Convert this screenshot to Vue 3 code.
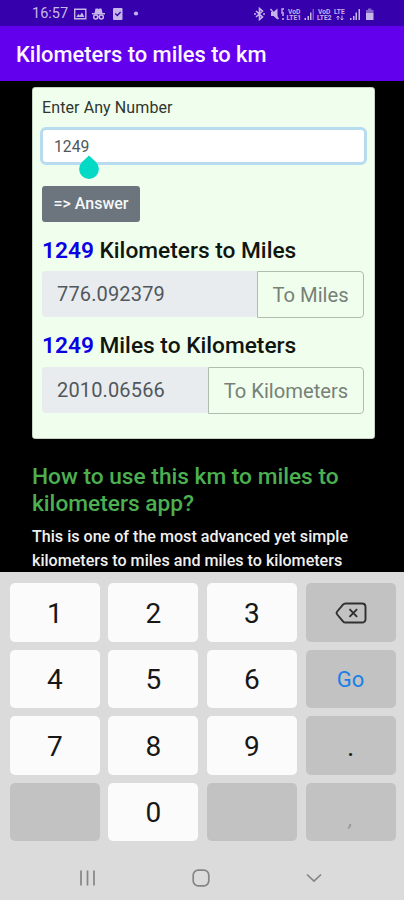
<script setup>
import { ref } from 'vue'

const value = ref('1249')
const keys = [
  { label: '1' }, { label: '2' }, { label: '3' }, { icon: 'backspace', dark: true },
  { label: '4' }, { label: '5' }, { label: '6' }, { label: 'Go', dark: true, go: true },
  { label: '7' }, { label: '8' }, { label: '9' }, { label: '.', dark: true },
  { label: '', dark: true }, { label: '0' }, { label: '', dark: true }, { label: ',', dark: true, comma: true },
]
</script>

<template>
  <div class="phone">
    <header class="status">
      <span class="time">16:57</span>
      <svg class="notices" width="70" height="14" viewBox="0 0 70 14">
        <path fill-rule="evenodd" d="M0 1.500h12.500v11H0zM1.400 3v8h9.700V3zM2.300 10l2-3 1.600 1.500L8 5.500 10.500 10z" />
        <path d="M21.500 1.500h2l1 .6 1-.6h2l1 4.500H31v1.500H18V6h2.500z" />
        <circle cx="21.700" cy="10" r="2" fill="none" stroke="#cabce9" stroke-width="1.500" />
        <circle cx="27.300" cy="10" r="2" fill="none" stroke="#cabce9" stroke-width="1.500" />
        <path d="M23.500 9.300h2v1h-2z" />
        <rect x="39" y="1" width="9.500" height="12" rx="1" />
        <path d="M41.300 6.500l2 2 3.300-3.500" fill="none" stroke="#3700ad" stroke-width="1.300" />
        <circle cx="62" cy="6.500" r="2.100" />
      </svg>
      <svg class="signals" width="124" height="14" viewBox="0 0 124 14">
        <path d="M4 4l6.500 6-3 2.500v-11l3 2.500L4 10M2 7h2M11 7h2" fill="none" stroke="#c5b5e9" stroke-width="1.600" />
        <path d="M19 5h2.500l4-3.500v11L21.500 9H19z" />
        <path d="M18.500 2l8 10M32 2h-2v4h2m-2 2h2m-2 4h2" fill="none" stroke="#c5b5e9" stroke-width="1.300" />
        <text x="36" y="6.700">VoD</text><text x="34.500" y="13">LTE1</text>
        <path d="M52.500 13v-2H54v2zm3 0V9H57v4zm2.500 0V5.500h1.500V13z" />
        <path d="M60.500 13V2H62v11z" opacity=".45" />
        <text x="66" y="6.700">VoD</text><text x="65" y="13">LTE2</text>
        <text x="82" y="6.700">LTE</text>
        <path d="M86 13V9m-1.500 1.500L86 9l1.500 1.500M90 8.500V13m-1.500-1.500L90 13l1.500-1.500" fill="none" stroke="#c5b5e9" />
        <path d="M98 13v-2h1.500v2zm3 0V9h1.500v4zm2.500 0V5.500h1.500V13zm3 0V2h1.500v11z" />
        <path d="M114 3h2V1.500h3.500V3h2v3H114z" opacity=".55" />
        <path d="M114 6h7.500v7H114z" />
      </svg>
    </header>
    <div class="appbar">Kilometers to miles to km</div>

    <main class="content">
      <section class="card">
        <label class="label" for="amount">Enter Any Number</label>
        <div class="field">
          <input id="amount" v-model="value" class="input" inputmode="decimal" />
          <svg class="handle" width="20" height="24" viewBox="0 0 20 24">
            <path d="M10 .5L17 7A9.900 9.900 0 1 1 3 7z" fill="#03dac5" />
          </svg>
        </div>
        <button class="answer">=&gt; Answer</button>
        <h2 class="result first"><b>{{ value }}</b> Kilometers to Miles</h2>
        <div class="group">
          <span class="output">776.092379</span>
          <span class="unit miles">To Miles</span>
        </div>
        <h2 class="result second"><b>{{ value }}</b> Miles to Kilometers</h2>
        <div class="group">
          <span class="output">2010.06566</span>
          <span class="unit kms">To Kilometers</span>
        </div>
      </section>
      <h3 class="howto">How to use this km to miles to<br />kilometers app?</h3>
      <p class="about">This is one of the most advanced yet simple<br />kilometers to miles and miles to kilometers</p>
    </main>

    <section class="keyboard">
      <div class="keys">
        <div
          v-for="(key, i) in keys"
          :key="i"
          class="key"
          :class="{ dark: key.dark, go: key.go, comma: key.comma }"
        >
          <svg v-if="key.icon" width="32" height="22" viewBox="0 0 32 22">
            <path d="M10.500 1.500H27Q30.500 1.500 30.500 5V17Q30.500 20.500 27 20.500H10.500Q9 20.500 8 19.300L2.200 12.500Q1 11 2.200 9.500L8 2.700Q9 1.500 10.500 1.500z" fill="none" stroke="#303030" stroke-width="1.900" />
            <path d="M14.500 7.200l7.600 7.600m0-7.600l-7.600 7.600" stroke="#303030" stroke-width="1.900" />
          </svg>
          <span v-else>{{ key.label }}</span>
        </div>
      </div>
      <nav class="nav">
        <svg width="18" height="16" viewBox="0 0 18 16"><path d="M2 .5v15M8.500.5v15M15 .5v15" /></svg>
        <svg width="18" height="18" viewBox="0 0 18 18"><rect x="1.200" y="1.200" width="15.600" height="15.600" rx="5" /></svg>
        <svg width="18" height="16" viewBox="0 0 18 16"><path d="M2 4.500l7 6.500 7-6.500" /></svg>
      </nav>
    </section>
  </div>
</template>

<style>
body { margin: 0; background: #000; }
</style>

<style scoped>
* { box-sizing: border-box; }
.phone {
  width: 404px; height: 900px; display: flex; flex-direction: column;
  overflow: hidden; background: #000; font-family: Roboto, sans-serif;
}
.status {
  height: 26px; flex: none; display: flex; align-items: center;
  padding: 1px 28px 0 32px; background: #3700ad; color: #c7b8e9;
}
.status svg { fill: #c5b5e9; }
.status text { font: 700 6.700px Roboto, sans-serif; }
.time { width: 42px; font-size: 14.500px; white-space: nowrap; }
.signals { margin-left: auto; }
.appbar {
  height: 55px; flex: none; display: flex; align-items: center; padding: 2px 16px 0;
  background: #6200ee; color: #fbf5ff; font-size: 21.900px; font-weight: 500; white-space: nowrap;
}
.content { height: 491px; flex: none; overflow: hidden; padding: 6px 29px 0 32px; }
.card {
  height: 352px; padding: 11px 11px 0 10px; border-radius: 4px; background: #f0ffed;
  box-shadow: inset 0 0 0 .5px #9da59b;
}
.label { display: block; height: 29px; font-size: 16px; line-height: 20px; color: #303530; letter-spacing: .1px; }
.field { position: relative; height: 38px; margin-left: -2px; margin-right: -3px; }
.input {
  display: block; width: 100%; height: 38px; padding: 0 11px; border: 3px solid #b8dcef;
  border-radius: 6px; background: #fff; outline: 0; color: #51575b;
  font-family: Roboto, sans-serif; font-size: 15.700px;
}
.handle { position: absolute; left: 39px; top: 28px; }
.answer {
  display: flex; align-items: center; justify-content: center; width: 98px; height: 36px;
  margin-top: 21px; padding: 0 0 1px; border: 0; border-radius: 3px; background: #6c757d;
  color: #f5f8f8; font-family: Roboto, sans-serif; font-size: 16px; font-weight: 500;
}
.result { margin: 0; font-size: 22.700px; font-weight: 500; line-height: 28px; color: #101510; white-space: nowrap; }
.result b { color: #0b00e5; font-weight: 600; }
.first { margin-top: 15px; height: 34px; }
.second { margin-top: 14px; height: 35px; }
.group { display: flex; height: 47px; }
.output {
  flex: 1; height: 46px; padding-left: 15px; background: #e9ecef; border-radius: 4px 0 0 4px;
  font-size: 20px; line-height: 47px; color: #50575d; letter-spacing: .15px;
}
.unit {
  height: 47px; border: 1px solid #b0bcb0; border-radius: 0 4px 4px 0; text-align: center;
  font-size: 20.200px; line-height: 47px; color: #788078; white-space: nowrap;
}
.miles { width: 107px; }
.kms { width: 156px; }
.howto { margin: 24px 0 0; font-size: 22.700px; line-height: 27px; font-weight: 500; color: #4caf50; white-space: nowrap; }
.about { margin: 8px 0 0; font-size: 16.100px; line-height: 24px; font-weight: 500; color: #f0f0f0; white-space: nowrap; }
.keyboard { flex: 1; padding: 11px 9px 0 9.800px; background: #dbdbdb; }
.keys { display: grid; grid-template-columns: repeat(4, 90px); grid-auto-rows: 58.500px; gap: 8px 8.600px; }
.key {
  display: flex; align-items: center; justify-content: center; padding-top: 2px; border-radius: 5px;
  background: #fbfbfb; color: #171717; font-size: 28px;
}
.dark { background: #c2c2c2; }
.go { color: #1a7fe8; font-size: 22px; }
.comma { color: #979797; font-size: 20px; font-style: italic; padding-top: 15px; }
.nav { height: 74px; display: flex; align-items: center; justify-content: space-between; padding: 0 72px 0 69px; }
.nav svg { fill: none; stroke: #858585; stroke-width: 1.700; }
</style>
